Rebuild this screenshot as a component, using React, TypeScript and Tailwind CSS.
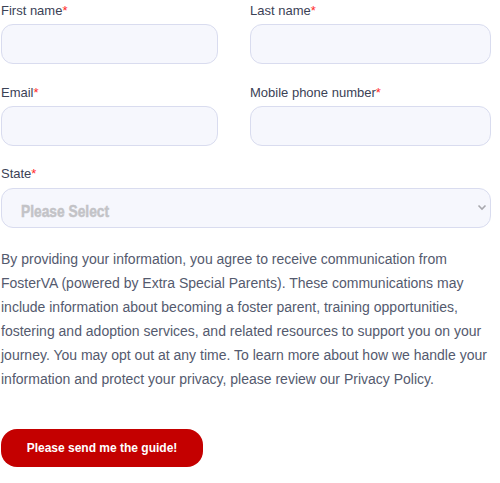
import React from 'react';

const Label = ({ text }: { text: string }) => (
  <label className="block text-[13px] leading-[15px] text-[#3b4256]">
    {text}
    <span className="text-[#ff2a2a]">*</span>
  </label>
);

const Field = ({ label }: { label: string }) => (
  <div className="flex flex-col gap-[6px]">
    <Label text={label} />
    <input
      type="text"
      className="h-10 w-full rounded-xl border border-[#d9dcef] bg-[#f6f7fd] px-3 outline-none"
    />
  </div>
);

export default function App() {
  return (
    <div
      className="w-[500px] bg-white pl-[1px] pt-[3px] pr-[9px]"
      style={{ fontFamily: '"Liberation Sans", Arial, sans-serif' }}
    >
      <form className="flex flex-col" onSubmit={(e) => e.preventDefault()}>
        <div className="grid grid-cols-[217px_241px] gap-x-[32px] gap-y-[21px]">
          <Field label="First name" />
          <Field label="Last name" />
          <Field label="Email" />
          <Field label="Mobile phone number" />
        </div>

        <div className="mt-[20px] flex flex-col gap-[7px]">
          <Label text="State" />
          <div className="relative">
            <select
              defaultValue=""
              className="h-10 w-full appearance-none rounded-xl border border-[#d9dcef] bg-[#f6f7fd] pl-[20px] text-[16px] text-transparent outline-none"
            >
              <option value="" disabled>
                Please Select
              </option>
            </select>
            {/* placeholder drawn over the select in a condensed heavy look */}
            <span className="pointer-events-none absolute left-[20px] top-[14px] origin-left scale-x-[0.81] whitespace-nowrap text-[17px] font-bold leading-[20px] text-[#c3c3c7] [-webkit-text-stroke:0.5px_#c3c3c7]">
              Please Select
            </span>
            <svg
              className="pointer-events-none absolute right-[4px] top-[16px]"
              width="10"
              height="7"
              viewBox="0 0 10 7"
              fill="none"
            >
              <path d="M1.5 1.5 L5 5 L8.5 1.5" stroke="#a8a8ae" strokeWidth="1.6" />
            </svg>
          </div>
        </div>

        <p className="mt-[19px] text-[14px] leading-[24px] text-[#545a6e]">
          By providing your information, you agree to receive communication from
          FosterVA (powered by Extra Special Parents). These communications may
          include information about becoming a foster parent, training opportunities,
          fostering and adoption services, and related resources to support you on your
          journey. You may opt out at any time. To learn more about how we handle your
          information and protect your privacy, please review our Privacy Policy.
        </p>

        <div className="mt-[38px] pb-[17px]">
          <button
            type="submit"
            className="h-[38px] w-[202px] rounded-[16px] bg-[#c40000] text-[12px] font-bold text-white"
          >
            Please send me the guide!
          </button>
        </div>
      </form>
    </div>
  );
}
